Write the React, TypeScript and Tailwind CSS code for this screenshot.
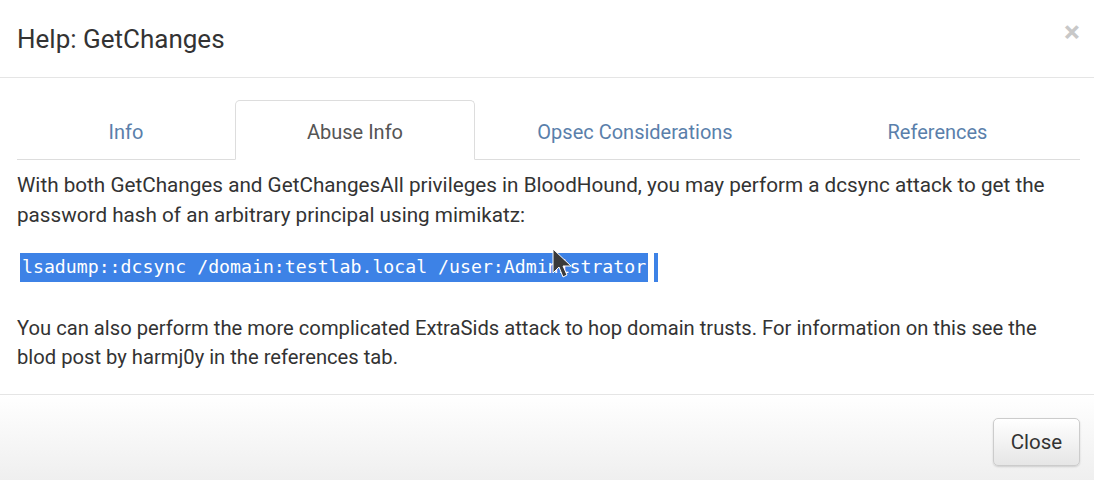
import React from 'react'

const tabs = [
  { label: 'Info', w: 'w-[218px]' },
  { label: 'Abuse Info', w: 'w-[240px]', active: true },
  { label: 'Opsec Considerations', w: 'w-[320px]' },
  { label: 'References', w: 'w-[285px]' },
]

export default function App() {
  return (
    <div className="relative h-[480px] w-[1094px] overflow-hidden bg-white font-['Roboto',sans-serif] text-[#333]">
      {/* header */}
      <div className="flex h-[78px] items-center justify-between border-b border-[#e5e5e5] pl-[17px] pr-[14px]">
        <h4 className="pt-[2px] text-[26px] text-[#333]">Help: GetChanges</h4>
        <button className="mb-[14px] text-[30px] font-bold leading-none text-[#c8c8c8]">×</button>
      </div>

      {/* body */}
      <div className="pl-[17px] pr-[14px] pt-[22px]">
        <ul className="flex border-b border-[#ddd]">
          {tabs.map((t) => (
            <li
              key={t.label}
              className={`${t.w} -mb-px flex h-[60px] items-center justify-center rounded-t-[5px] pt-[3px] text-[20px] ${
                t.active
                  ? 'border border-[#ddd] border-b-white bg-white text-[#555]'
                  : 'border border-transparent text-[#5a7fab]'
              }`}
            >
              {t.label}
            </li>
          ))}
        </ul>

        <p className="mt-[10px] text-[20.7px] leading-[30px]">
          With both GetChanges and GetChangesAll privileges in BloodHound, you may perform a dcsync attack to get the
          password hash of an arbitrary principal using mimikatz:
        </p>

        <div className="mt-[22px] flex h-[30px] items-center">
          <code className="ml-[3px] flex h-[29px] items-center bg-[#3d82e6] pl-[2px] pr-[2px] font-['DejaVu_Sans_Mono',monospace] text-[18.2px] text-white">
            lsadump::dcsync /domain:testlab.local /user:Administrator
          </code>
          <span className="ml-[6px] h-[29px] w-[4px] bg-[#3d82e6]" />
        </div>

        <p className="mt-[32px] text-[20.2px] leading-[29px]">
          You can also perform the more complicated ExtraSids attack to hop domain trusts. For information on this see the
          blod post by harmj0y in the references tab.
        </p>
      </div>

      {/* cursor */}
      <svg className="absolute left-[551px] top-[248px]" width="22" height="32" viewBox="0 0 22 32">
        <path d="M2 1 L2 25 L8 19 L12 29 L16 27 L12 18 L20 18 Z" fill="#3a3a3a" stroke="#fff" strokeWidth="1" />
      </svg>

      {/* footer */}
      <div className="absolute bottom-0 left-0 right-0 flex h-[86px] items-center justify-end border-t border-[#e5e5e5] bg-gradient-to-b from-white to-[#efefef] pr-[14px]">
        <button className="mt-[9px] h-[48px] w-[87px] rounded-[5px] border border-[#ccc] bg-gradient-to-b from-white to-[#e6e6e6] text-[20.5px] text-[#333] shadow-[0_1px_2px_rgba(0,0,0,0.15)]">
          Close
        </button>
      </div>
    </div>
  )
}
